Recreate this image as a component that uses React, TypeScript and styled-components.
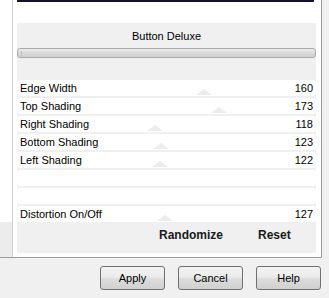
import React from 'react';
import styled, { createGlobalStyle } from 'styled-components';

const Global = createGlobalStyle`
  html, body { margin: 0; padding: 0; }
  body {
    width: 329px; height: 298px; overflow: hidden;
    background: #f0f0f0;
    font-family: "Liberation Sans", Arial, sans-serif;
    color: #000;
  }
`;

const Page = styled.div`
  width: 329px;
  height: 298px;
  display: flex;
  flex-direction: column;
`;

const Frame = styled.div`
  width: 321px;
  height: 257px;
  display: flex;
  background: #fff;
  border-right: 1px solid #9c9c9c;
  border-bottom: 1px solid #9c9c9c;
`;

const LeftCol = styled.div`
  width: 12px;
  display: flex;
  flex-direction: column;
  border-right: 1px solid #d2d2d2;
`;

const LeftTop = styled.div`
  flex: 1;
  background: #fff;
`;

const LeftBottom = styled.div`
  height: 35px;
  background: #ececec;
`;

const Gutter = styled.div<{ $w: number }>`
  width: ${p => p.$w}px;
  background: #fff;
`;

const MainCol = styled.div`
  width: 299px;
  display: flex;
  flex-direction: column;
`;

const TopLine = styled.div`
  height: 2px;
  width: 297px;
  background: #14142c;
`;

const TopSpace = styled.div`
  height: 21px;
  background: #fff;
`;

const Panel = styled.div`
  height: 230px;
  background: #f0f0f0;
  display: flex;
  flex-direction: column;
`;

const Title = styled.div`
  padding-top: 6px;
  line-height: 14px;
  font-size: 11px;
  text-align: center;
  box-sizing: border-box;
  height: 25px;
`;

const Bar = styled.div`
  height: 10px;
  box-sizing: border-box;
  border: 1px solid #a9a9a9;
  border-radius: 3px;
  background: linear-gradient(#ececec, #dadada 50%, #cfcfcf);
  position: relative;
`;

const BarTick = styled.div`
  position: absolute;
  left: 3px;
  top: 2px;
  width: 4px;
  height: 4px;
  border-left: 1px solid #bdbdbd;
`;

const Spacer = styled.div<{ $h: number }>`
  height: ${p => p.$h}px;
`;

const Rows = styled.div`
  display: flex;
  flex-direction: column;
  gap: 2px;
`;

const Row = styled.div`
  position: relative;
  height: 16px;
  background: #fff;
  border-radius: 3px;
  display: flex;
  align-items: center;
  justify-content: space-between;
  padding: 0 3px 0 3px;
  font-size: 11px;
  line-height: 16px;
`;

const Label = styled.span`
  position: relative;
  z-index: 1;
`;

const Value = styled.span`
  position: relative;
  z-index: 1;
`;

const Thumb = styled.div`
  position: absolute;
  bottom: 1px;
  width: 0;
  height: 0;
  border-left: 8px solid transparent;
  border-right: 8px solid transparent;
  border-bottom: 6px solid #ececec;
`;

const Actions = styled.div`
  display: flex;
  align-items: center;
  height: 26px;
  padding-left: 142px;
  gap: 35px;
  font-size: 12px;
  font-weight: bold;
  color: #1a1a1a;
`;

const ButtonBar = styled.div`
  flex: 1;
  display: flex;
  justify-content: flex-end;
  align-items: flex-start;
  gap: 13px;
  padding: 8px 8px 0 0;
`;

const Button = styled.button`
  width: 65px;
  height: 24px;
  box-sizing: border-box;
  border: 1px solid #707070;
  border-radius: 3px;
  background: linear-gradient(#f3f3f3, #ebebeb 45%, #dcdcdc 55%, #d0d0d0);
  font-family: "Liberation Sans", Arial, sans-serif;
  font-size: 11px;
  color: #000;
  padding: 0;
`;

const rows: { label: string; value?: number }[] = [
  { label: 'Edge Width', value: 160 },
  { label: 'Top Shading', value: 173 },
  { label: 'Right Shading', value: 118 },
  { label: 'Bottom Shading', value: 123 },
  { label: 'Left Shading', value: 122 },
  { label: '' },
  { label: '' },
  { label: 'Distortion On/Off', value: 127 },
];

export default function App() {
  return (
    <Page>
      <Global />
      <Frame>
        <LeftCol>
          <LeftTop />
          <LeftBottom />
        </LeftCol>
        <Gutter $w={4} />
        <MainCol>
          <TopLine />
          <TopSpace />
          <Panel>
            <Title>Button Deluxe</Title>
            <Bar>
              <BarTick />
            </Bar>
            <Spacer $h={22} />
            <Rows>
              {rows.map((r, i) => (
                <Row key={i}>
                  {r.value !== undefined && (
                    <Thumb style={{ left: Math.round((r.value / 255) * 298) - 8 }} />
                  )}
                  <Label>{r.label}</Label>
                  <Value>{r.value ?? ''}</Value>
                </Row>
              ))}
            </Rows>
            <Actions>
              <span>Randomize</span>
              <span>Reset</span>
            </Actions>
          </Panel>
        </MainCol>
        <Gutter $w={5} />
      </Frame>
      <ButtonBar>
        <Button>Apply</Button>
        <Button>Cancel</Button>
        <Button>Help</Button>
      </ButtonBar>
    </Page>
  );
}
